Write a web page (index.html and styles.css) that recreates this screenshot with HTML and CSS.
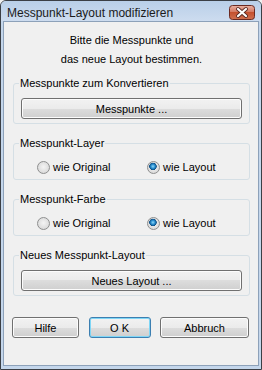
FILE: index.html
```html
<!DOCTYPE html>
<html lang="de">
<head>
  <meta charset="UTF-8" />
  <title>Messpunkt-Layout modifizieren</title>
  <link rel="stylesheet" href="styles.css">
</head>
<body>
  <div class="window">
    <div class="titlebar">
      <span class="title">Messpunkt-Layout modifizieren</span>
      <span class="close">
        <svg width="26" height="15" viewBox="0 0 26 15">
          <defs>
            <linearGradient id="red" x1="0" y1="0" x2="0" y2="1">
              <stop offset="0" stop-color="#e9b2a3"/>
              <stop offset="0.45" stop-color="#d57a63"/>
              <stop offset="0.5" stop-color="#c5512f"/>
              <stop offset="1" stop-color="#d0704f"/>
            </linearGradient>
          </defs>
          <rect x="0.5" y="0.5" width="25" height="14" rx="3" fill="url(#red)" stroke="#6b2a22"/>
          <path d="M9 4 L17 11 M17 4 L9 11" stroke="#5a2a24" stroke-width="4" stroke-linecap="round"/>
          <path d="M9 4 L17 11 M17 4 L9 11" stroke="#ffffff" stroke-width="2.2" stroke-linecap="round"/>
        </svg>
      </span>
    </div>

    <div class="client">
      <div class="intro">
        <p>Bitte die Messpunkte und</p>
        <p>das neue Layout bestimmen.</p>
      </div>

      <!-- Messpunkte -->
      <fieldset class="group">
        <legend>Messpunkte zum Konvertieren</legend>
        <button class="btn wide">Messpunkte ...</button>
      </fieldset>

      <!-- Layer -->
      <fieldset class="group">
        <legend>Messpunkt-Layer</legend>
        <div class="radio-row">
          <label class="radio"><span class="dot"></span>wie Original</label>
          <label class="radio"><span class="dot checked"></span>wie Layout</label>
        </div>
      </fieldset>

      <!-- Farbe -->
      <fieldset class="group">
        <legend>Messpunkt-Farbe</legend>
        <div class="radio-row">
          <label class="radio"><span class="dot"></span>wie Original</label>
          <label class="radio"><span class="dot checked"></span>wie Layout</label>
        </div>
      </fieldset>

      <!-- Neues Layout -->
      <fieldset class="group">
        <legend>Neues Messpunkt-Layout</legend>
        <button class="btn wide">Neues Layout ...</button>
      </fieldset>

      <div class="actions">
        <button class="btn help">Hilfe</button>
        <button class="btn ok">O K</button>
        <button class="btn cancel">Abbruch</button>
      </div>
    </div>
  </div>
</body>
</html>
```

FILE: styles.css
```css
body {
  margin: 0;
  background: #f0f0f0;
  font-family: 'Liberation Sans', Arial, sans-serif;
  font-size: 11px;
  color: #000;
}

.window {
  width: 262px;
  height: 370px;
  box-sizing: border-box;
  border: 1px solid #3b3f45;
  border-radius: 6px 6px 0 0;
  background: #c4d6eb;
  padding: 0 2px 3px 2px;
  display: flex;
  flex-direction: column;
}

.titlebar {
  height: 20px;
  display: flex;
  justify-content: space-between;
  align-items: flex-start;
  padding: 0 4px;
  background: linear-gradient(#b9cfe8, #cddcef);
  border-radius: 5px 5px 0 0;
  margin: 0 -2px;
  padding: 0 6px;
}

.title {
  font-size: 12px;
  line-height: 16px;
  padding-top: 4px;
  color: #1b1b1b;
}

.close {
  margin-top: 4px;
  height: 15px;
}

.close svg {
  display: block;
}

.client {
  flex: 1;
  background: #f0f0f0;
  border: 1px solid #8da1b9;
  padding: 9px 8px 0 9px;
  display: flex;
  flex-direction: column;
}

.intro {
  text-align: center;
}

.intro p {
  margin: 0;
  line-height: 19px;
}

.group {
  margin: 8px 0 0 0;
  border: 1px solid #d5dfe5;
  border-radius: 3px;
  padding: 8px 7px 4px 7px;
}

.group + .group {
  margin-top: 13px;
}

.group legend {
  padding: 0 1px;
  margin-left: -2px;
  line-height: 13px;
}

.btn {
  height: 21px;
  box-sizing: border-box;
  border: 1px solid #707070;
  border-radius: 3px;
  background: linear-gradient(#f2f2f2 0%, #ebebeb 50%, #dddddd 50%, #cfcfcf 100%);
  box-shadow: inset 0 0 0 1px #fcfcfc;
  font-family: 'Liberation Sans', Arial, sans-serif;
  font-size: 11px;
  color: #000;
  padding: 0;
}

.wide {
  display: block;
  width: 100%;
}

.radio-row {
  display: grid;
  grid-template-columns: 110px auto;
  margin-left: 16px;
  padding: 1px 0 0 0;
  height: 16px;
}

.radio {
  display: flex;
  align-items: center;
  gap: 3px;
}

.dot {
  width: 13px;
  height: 13px;
  box-sizing: border-box;
  border-radius: 50%;
  border: 1px solid #8e8f8f;
  background: radial-gradient(circle at 50% 45%, #f4f4f4 0%, #dcdcdc 70%, #c8c8c8 100%);
}

.dot.checked {
  background:
    radial-gradient(circle at 45% 40%, #8fd8f8 0, #2a8fd0 2px, #0d4f85 3.5px, transparent 4px),
    radial-gradient(circle at 50% 45%, #f4f4f4 0%, #dcdcdc 70%, #c8c8c8 100%);
}

.actions {
  display: flex;
  justify-content: space-between;
  margin: 21px 1px 0 -1px;
}

.help {
  width: 67px;
}

.ok {
  width: 62px;
  border-color: #3c7fb1;
  box-shadow: inset 0 0 0 1px #7fd6f6;
}

.cancel {
  width: 89px;
}
```
